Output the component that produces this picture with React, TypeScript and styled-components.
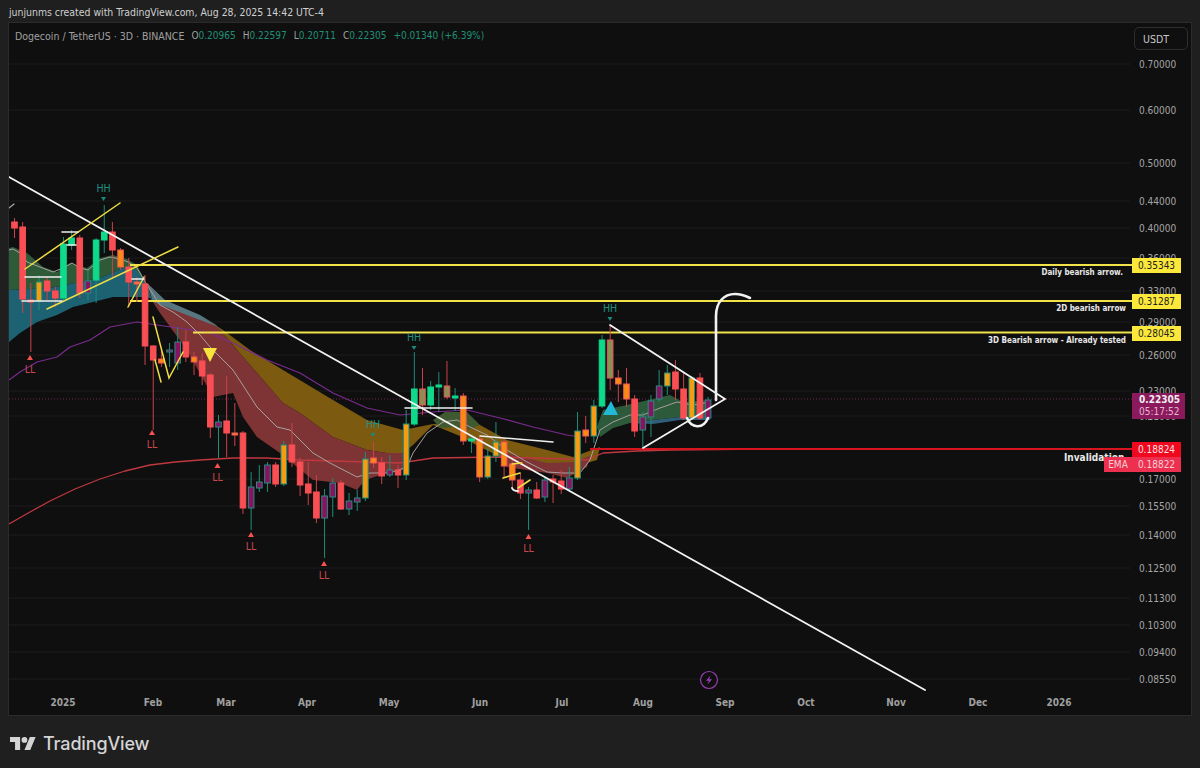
import styled, { createGlobalStyle } from "styled-components";

const GlobalStyle = createGlobalStyle`
  html, body { margin: 0; padding: 0; background: #1f1f1f; }
  body { font-family: "DejaVu Sans Condensed", "Open Sans", sans-serif; }
`;

// type, wick top, body top, body bottom, wick bottom. x comes from the index.
type Bar = [string, number, number, number, number];
const bars: Bar[] = [
  ["r", 218, 222, 228, 238], ["r", 222, 227, 299, 313], ["r", 283, 300, 302, 352], ["o", 275, 282, 301, 310],
  ["r", 277, 281, 291, 300], ["r", 287, 291, 298, 307], ["g", 237, 244, 298, 300], ["g", 230, 238, 245, 250],
  ["r", 235, 238, 293, 298], ["p", 270, 281, 293, 300], ["g", 238, 240, 280, 303], ["g", 205, 232, 240, 253],
  ["r", 222, 232, 250, 277], ["q", 248, 250, 267, 270], ["r", 258, 267, 282, 307], ["q", 277, 282, 284, 302],
  ["r", 275, 284, 346, 365], ["r", 345, 346, 360, 430], ["q", 350, 359, 363, 367], ["p", 343, 350, 352, 367],
  ["p", 327, 342, 363, 370], ["r", 330, 342, 357, 362], ["q", 352, 357, 362, 375], ["r", 353, 361, 376, 385],
  ["r", 373, 375, 427, 438], ["p", 415, 422, 427, 458], ["r", 376, 421, 433, 457], ["q", 403, 433, 435, 446],
  ["r", 431, 433, 508, 514], ["p", 472, 487, 508, 530], ["p", 465, 482, 488, 492], ["p", 462, 465, 483, 492],
  ["r", 462, 465, 484, 487], ["o", 441, 445, 484, 486], ["r", 423, 445, 462, 467], ["r", 458, 462, 485, 496],
  ["r", 462, 484, 493, 505], ["r", 475, 492, 518, 523], ["p", 489, 496, 518, 558], ["p", 478, 483, 497, 517],
  ["r", 480, 483, 509, 510], ["p", 493, 501, 509, 515], ["p", 490, 498, 502, 511], ["o", 452, 459, 498, 501],
  ["q", 442, 458, 463, 468], ["r", 457, 463, 476, 484], ["p", 455, 470, 475, 477], ["r", 465, 470, 475, 488],
  ["o", 410, 424, 475, 480], ["g", 352, 389, 424, 426], ["v", 368, 389, 405, 415], ["g", 381, 387, 405, 410],
  ["g", 372, 385, 387, 412], ["v", 361, 386, 397, 399], ["g", 388, 396, 397, 411], ["q", 393, 396, 441, 445],
  ["g", 435, 439, 441, 453], ["q", 436, 439, 477, 482], ["o", 448, 456, 477, 479], ["o", 422, 442, 456, 462],
  ["q", 438, 442, 466, 478], ["q", 460, 464, 480, 488], ["r", 473, 480, 493, 499], ["p", 487, 490, 493, 530],
  ["r", 482, 490, 498, 499], ["p", 478, 480, 497, 502], ["r", 475, 479, 482, 503], ["r", 470, 481, 489, 494],
  ["p", 467, 478, 489, 491], ["o", 412, 431, 478, 480], ["q", 416, 430, 436, 443], ["o", 400, 406, 436, 443],
  ["g", 335, 340, 406, 408], ["v", 325, 340, 378, 390], ["q", 370, 378, 384, 402], ["q", 368, 384, 399, 407],
  ["r", 395, 399, 431, 437], ["p", 412, 417, 430, 448], ["p", 395, 401, 417, 437], ["p", 370, 386, 399, 402],
  ["o", 365, 373, 386, 395], ["r", 360, 372, 389, 400], ["r", 373, 389, 418, 420], ["o", 376, 378, 418, 420],
  ["r", 373, 378, 418, 420], ["p", 397, 400, 418, 420],
];

const barStyle: Record<string, { fill: string; edge: string; wick: string }> = {
  r: { fill: "#f94f54", edge: "#f94f54", wick: "#c9434a" },
  g: { fill: "#0fd98a", edge: "#0fd98a", wick: "#1b8a78" },
  o: { fill: "#f59c12", edge: "#1f8f7a", wick: "#1f8f7a" },
  q: { fill: "#f98a14", edge: "#f2565a", wick: "#c9434a" },
  p: { fill: "#86145f", edge: "#2a8a84", wick: "#1f8f7a" },
  v: { fill: "#8d8f52", edge: "#e8565a", wick: "#c9434a" },
};

const ticks: [string, number][] = [
  ["0.70000", 64], ["0.60000", 110], ["0.50000", 163], ["0.44000", 201], ["0.40000", 228], ["0.36000", 258],
  ["0.33000", 291], ["0.29000", 322], ["0.26000", 355], ["0.23000", 391], ["0.21000", 416], ["0.17000", 479],
  ["0.15500", 506], ["0.14000", 535], ["0.12500", 568], ["0.11300", 598], ["0.10300", 625], ["0.09400", 652],
  ["0.08550", 679],
];

const months: [string, number][] = [
  ["2025", 63], ["Feb", 153], ["Mar", 226], ["Apr", 307], ["May", 389], ["Jun", 480], ["Jul", 562],
  ["Aug", 643], ["Sep", 725], ["Oct", 806], ["Nov", 896], ["Dec", 978], ["2026", 1059],
];

const highs: [number, number][] = [[103.5, 199], [373, 435], [414, 348], [610, 319]];
const lows: [number, number][] = [[30, 358], [152, 433], [217.5, 466], [251, 535], [324, 564], [528.5, 537]];

const notes: [string, number, number][] = [
  ["Daily bearish arrow.", 1123, 275],
  ["2D bearish arrow", 1126, 311],
  ["3D Bearish arrow - Already tested", 1126, 343],
];

const Page = styled.div`
  width: 1200px;
  height: 768px;
  display: flex;
  flex-direction: column;
  overflow: hidden;
`;

const Credit = styled.div`
  height: 23px;
  padding-left: 9px;
  display: flex;
  align-items: center;
  font-size: 10.4px;
  color: #d0d0d0;
  white-space: nowrap;
`;

const ChartFrame = styled.div`
  position: relative;
  margin: 0 9px;
  height: 692px;
  background: #0f0f0f;
  box-shadow: 0 0 0 1px #2b2b2b;
`;

const Plot = styled.svg`
  display: block;
  width: 1182px;
  height: 692px;
`;

const Legend = styled.div`
  position: absolute;
  top: 6px;
  left: 6px;
  display: flex;
  gap: 7px;
  font-size: 10px;
  line-height: 14px;
  color: #a0a0a0;
  white-space: nowrap;
`;

const LegendTitle = styled.span`
  font-size: 10.5px;
`;

const LegendValue = styled.span`
  color: #1f8f78;
`;

const CurrencyButton = styled.div`
  position: absolute;
  top: 4px;
  right: 3px;
  width: 54px;
  height: 23px;
  box-sizing: border-box;
  padding-left: 8px;
  display: flex;
  align-items: center;
  border: 1px solid #2e2e2e;
  border-radius: 5px;
  font-size: 10.5px;
  color: #c8c8c8;
`;

const PriceTag = styled.div<{ $top: number; $bg: string; $ink: string }>`
  position: absolute;
  left: 1123px;
  top: ${(p) => p.$top}px;
  width: 49px;
  height: 15px;
  display: flex;
  align-items: center;
  justify-content: center;
  background: ${(p) => p.$bg};
  color: ${(p) => p.$ink};
  font-size: 10px;
`;

const CountdownTag = styled.div`
  position: absolute;
  left: 1123px;
  top: 370px;
  width: 53px;
  height: 26px;
  padding-left: 7px;
  box-sizing: border-box;
  background: #8a1a5c;
  color: #f0f0f0;
  font-size: 10px;
  font-weight: 700;
  line-height: 12.5px;
  display: flex;
  flex-direction: column;
  justify-content: center;
`;

const CountdownTime = styled.span`
  color: #e6b7d2;
  font-weight: 400;
`;

const EmaTag = styled.div`
  position: absolute;
  left: 1095px;
  top: 434px;
  width: 28px;
  height: 15px;
  display: flex;
  align-items: center;
  justify-content: center;
  background: #ee3050;
  color: #f4d0d6;
  font-size: 10px;
`;

const InvalidationNote = styled.div`
  position: absolute;
  left: 1055px;
  top: 428px;
  font-size: 10px;
  font-weight: 700;
  line-height: 14px;
  color: #e8e8e8;
`;

const Footer = styled.div`
  flex: 1;
  padding: 3px 0 0 10px;
  display: flex;
  align-items: center;
  gap: 7px;
`;

const Wordmark = styled.span`
  font-family: Inter, "Liberation Sans", sans-serif;
  font-size: 18px;
  font-weight: 500;
  letter-spacing: -0.15px;
  color: #d4d4d4;
`;

const TickText = styled.text`
  font-size: 10px;
  fill: #a6a6a6;
`;

const MonthText = styled.text`
  font-size: 10px;
  font-weight: 700;
  fill: #a0a0a0;
  text-anchor: middle;
`;

const NoteText = styled.text`
  font-size: 8px;
  font-weight: 700;
  fill: #e8e8e8;
  text-anchor: end;
`;

const MarkText = styled.text<{ $ink: string }>`
  font-size: 10.5px;
  fill: ${(p) => p.$ink};
  text-anchor: middle;
`;

const Candle = ({ bar, index }: { bar: Bar; index: number }) => {
  const [type, wickTop, top, bottom, wickBottom] = bar;
  const x = 14.5 + 8.16 * index;
  const look = barStyle[type];
  return (
    <g>
      <line x1={x} x2={x} y1={wickTop} y2={wickBottom} stroke={look.wick} strokeWidth={1} />
      <rect x={x - 2.8} y={top} width={5.6} height={Math.max(bottom - top, 2)} fill={look.fill} stroke={look.edge} strokeWidth={1} />
    </g>
  );
};

const Ribbons = () => (
  <g>
    <polygon fill="#2e5a38" points="9,248 13,247 27,253 43,267 57,272 70,263 87,268 100,258 113,255 127,259 137,265 147,285 130,270 123,268 100,278 50,288 9,290" />
    <polygon fill="#1d6272" points="9,290 50,288 100,278 123,268 137,270 147,285 153,302 160,313 150,298 147,297 133,297 113,297 93,302 73,307 57,315 37,322 20,333 9,342" />
    <polygon fill="#57767f" points="147,283 165,300 200,315 216,325 233,346 200,322 153,302" />
    <polygon fill="#7c5a10" points="200,315 223,330 250,350 283,370 333,400 367,420 403,430 403,453 387,453 367,450 333,437 300,413 283,403 237,350 216,325" />
    <polygon fill="#7e3434" points="153,302 200,320 216,326 237,350 283,403 300,413 333,437 367,450 387,453 403,453 403,470 387,473 365,480 357,490 340,483 313,480 280,453 257,437 243,417 233,393 213,397 187,350 160,313" />
    <polygon fill="#7c5a10" points="403,430 413,428 433,424 480,425 507,440 547,450 573,457 600,447 597,460 573,467 547,467 507,460 480,447 460,436 433,425 413,445 403,453" />
    <polygon fill="#3f5a30" points="433,420 445,412 467,412 480,425 467,430 455,427 440,428" />
    <polygon fill="#7e3434" points="507,453 547,463 573,462 590,456 587,467 567,478 547,473 507,467" />
    <polygon fill="#2d5a3a" points="597,427 603,410 613,408 627,405 670,395 683,402 710,400 710,417 680,417 653,420 630,423 613,428 600,437" />
    <polygon fill="#2f5f78" points="630,423 653,420 680,417 710,417 710,420 680,420 653,424" />
  </g>
);

const MovingAverages = () => (
  <g fill="none" strokeLinejoin="round">
    <polyline stroke="#7a2c8e" strokeWidth={1.2} points="9,380 20,372 37,362 57,357 70,347 90,340 110,327 137,322 157,325 193,330 210,333 233,343 267,360 300,373 333,393 367,408 400,415 433,412 467,410 500,418 533,427 567,435 580,437" />
    <polyline stroke="#bf3840" strokeWidth={1.3} points="9,524 30,512 50,501 75,489 100,479 125,471 150,465 175,462 200,460 233,458 267,458 300,460 367,462 400,463 433,458 500,457 567,459 587,460 603,453 637,451 670,450 760,449" />
    <polyline stroke="#a89f9f" strokeWidth={1} points="9,250 13,249 20,253 27,262 40,267 53,272 63,268 72,263 80,268 88,270 100,260 110,257 120,259 128,262 137,268 147,285 160,305 173,312 187,322 200,335 210,347 233,370 257,407 277,427 290,430 313,453 330,463 357,477 370,473 390,473 407,467 413,453 427,433 443,422 457,420 470,427 487,435 507,450 527,462 547,472 563,473 580,473 590,460 600,430 613,422 630,415 643,415 660,408 677,402 693,405 710,402" />
  </g>
);

const Drawings = () => (
  <g fill="none" strokeLinecap="round">
    <line x1={9} y1={177} x2={925} y2={690} stroke="#f2f2f2" strokeWidth={1.8} />
    <line x1={25} y1={269} x2={120} y2={203} stroke="#f0dd45" strokeWidth={1.5} />
    <line x1={47} y1={309} x2={178} y2={247} stroke="#f0dd45" strokeWidth={1.5} />
    <line x1={128} y1={307} x2={144} y2={277} stroke="#f0dd45" strokeWidth={1.5} />
    <polyline stroke="#f0dd45" strokeWidth={1.5} points="153,317 169,378 183,352" />
    <line x1={155} y1={360} x2={161} y2={382} stroke="#f0dd45" strokeWidth={1.5} />
    <line x1={503} y1={478} x2={520} y2={473} stroke="#f0dd45" strokeWidth={1.6} />
    <line x1={518} y1={488} x2={530} y2={480} stroke="#f0dd45" strokeWidth={1.6} />
    <line x1={512} y1={464} x2={522} y2={463} stroke="#f0dd45" strokeWidth={1.4} />
    <line x1={25} y1={277} x2={61} y2={277} stroke="#f0f0f0" strokeWidth={1.6} />
    <line x1={22} y1={301} x2={62} y2={301} stroke="#f0f0f0" strokeWidth={1.6} />
    <line x1={62} y1={232} x2={78} y2={232} stroke="#f0f0f0" strokeWidth={1.6} />
    <line x1={67} y1={245} x2={76} y2={245} stroke="#f0f0f0" strokeWidth={1.6} />
    <line x1={132} y1={279} x2={144} y2={279} stroke="#f0f0f0" strokeWidth={1.6} />
    <line x1={405} y1={408} x2={472} y2={408} stroke="#f0f0f0" strokeWidth={1.6} />
    <line x1={480} y1={436} x2={553} y2={442} stroke="#f0f0f0" strokeWidth={1.6} />
    <line x1={9} y1={208} x2={14} y2={204} stroke="#a8a8a8" strokeWidth={1.2} />
    <path d="M512 488 q1 3 6 3" stroke="#f0f0f0" strokeWidth={2} />
    <polyline stroke="#f2f2f2" strokeWidth={1.8} points="610,325 725,399 643,448" />
    <path d="M687 418 C691 428 703 430 708 418" stroke="#f2f2f2" strokeWidth={2.6} />
    <path d="M716 400 L716 316 C716 302 724 294 735 294 C741 294 746 296 750 298" stroke="#f2f2f2" strokeWidth={2.6} />
  </g>
);

const BoltBadge = () => (
  <g>
    <circle cx={709} cy={680} r={8.5} fill="#0f0f0f" stroke="#9b3fb5" strokeWidth={1.2} />
    <path d="M710.5 675.5 L706 680.8 L708.8 680.8 L707.5 684.5 L712 679.2 L709.2 679.2 Z" fill="#9b3fb5" />
  </g>
);

const TvLogo = () => (
  <svg width="26" height="13" viewBox="0 4 36 18">
    <path fill="#d4d4d4" d="M14 22H7V11H0V4h14v18zM28 22h-8l7.5-18h8L28 22z" />
    <circle fill="#d4d4d4" cx="20" cy="8" r="4" />
  </svg>
);

export default function App() {
  return (
    <Page>
      <GlobalStyle />
      <Credit>junjunms created with TradingView.com, Aug 28, 2025 14:42 UTC-4</Credit>
      <ChartFrame>
        <Plot viewBox="9 23 1182 692">
          {ticks.map(([, y]) => (
            <line key={y} x1={9} x2={1130} y1={y} y2={y} stroke="#1c1c1c" />
          ))}
          <line x1={9} x2={1132} y1={399} y2={399} stroke="#6a2a50" strokeDasharray="1 2" />
          <Ribbons />
          <MovingAverages />
          <line x1={130} x2={1132} y1={265} y2={265} stroke="#f2e24a" strokeWidth={1.8} />
          <line x1={130} x2={1132} y1={301} y2={301} stroke="#f2e24a" strokeWidth={1.8} />
          <line x1={193} x2={1132} y1={332.5} y2={332.5} stroke="#f2e24a" strokeWidth={1.8} />
          <line x1={590} x2={1132} y1={449} y2={449} stroke="#d8141f" strokeWidth={1.8} />
          {bars.map((bar, i) => (
            <Candle key={i} bar={bar} index={i} />
          ))}
          <Drawings />
          <polygon fill="#f8e23c" points="203,348 217,348 210,362" />
          <polygon fill="#22b8d8" points="611,401 603,415 618,415" />
          {highs.map(([x, y]) => (
            <g key={x}>
              <polygon fill="#1b8a78" points={`${x - 2.5},${y - 2} ${x + 2.5},${y - 2} ${x},${y + 2}`} />
              <MarkText $ink="#1f8f80" x={x} y={y - 7}>HH</MarkText>
            </g>
          ))}
          {lows.map(([x, y]) => (
            <g key={x}>
              <polygon fill="#f95050" points={`${x},${y - 3} ${x - 3},${y + 2} ${x + 3},${y + 2}`} />
              <MarkText $ink="#c8484e" x={x} y={y + 15}>LL</MarkText>
            </g>
          ))}
          {notes.map(([label, x, y]) => (
            <NoteText key={label} x={x} y={y}>{label}</NoteText>
          ))}
          <BoltBadge />
          {ticks.map(([label, y]) => (
            <TickText key={label} x={1139} y={y + 4}>{label}</TickText>
          ))}
          {months.map(([label, x]) => (
            <MonthText key={label} x={x} y={706}>{label}</MonthText>
          ))}
        </Plot>
        <Legend>
          <LegendTitle>Dogecoin / TetherUS · 3D · BINANCE</LegendTitle>
          <span>O<LegendValue>0.20965</LegendValue></span>
          <span>H<LegendValue>0.22597</LegendValue></span>
          <span>L<LegendValue>0.20711</LegendValue></span>
          <span>C<LegendValue>0.22305</LegendValue></span>
          <LegendValue>+0.01340 (+6.39%)</LegendValue>
        </Legend>
        <CurrencyButton>USDT</CurrencyButton>
        <InvalidationNote>Invalidation</InvalidationNote>
        <PriceTag $top={235} $bg="#fbe83a" $ink="#222">0.35343</PriceTag>
        <PriceTag $top={271} $bg="#fbe83a" $ink="#222">0.31287</PriceTag>
        <PriceTag $top={303} $bg="#fbe83a" $ink="#222">0.28045</PriceTag>
        <CountdownTag>
          <span>0.22305</span>
          <CountdownTime>05:17:52</CountdownTime>
        </CountdownTag>
        <PriceTag $top={419} $bg="#f0091e" $ink="#f6e0e0">0.18824</PriceTag>
        <EmaTag>EMA</EmaTag>
        <PriceTag $top={434} $bg="#ee3050" $ink="#f4d0d6">0.18822</PriceTag>
      </ChartFrame>
      <Footer>
        <TvLogo />
        <Wordmark>TradingView</Wordmark>
      </Footer>
    </Page>
  );
}
